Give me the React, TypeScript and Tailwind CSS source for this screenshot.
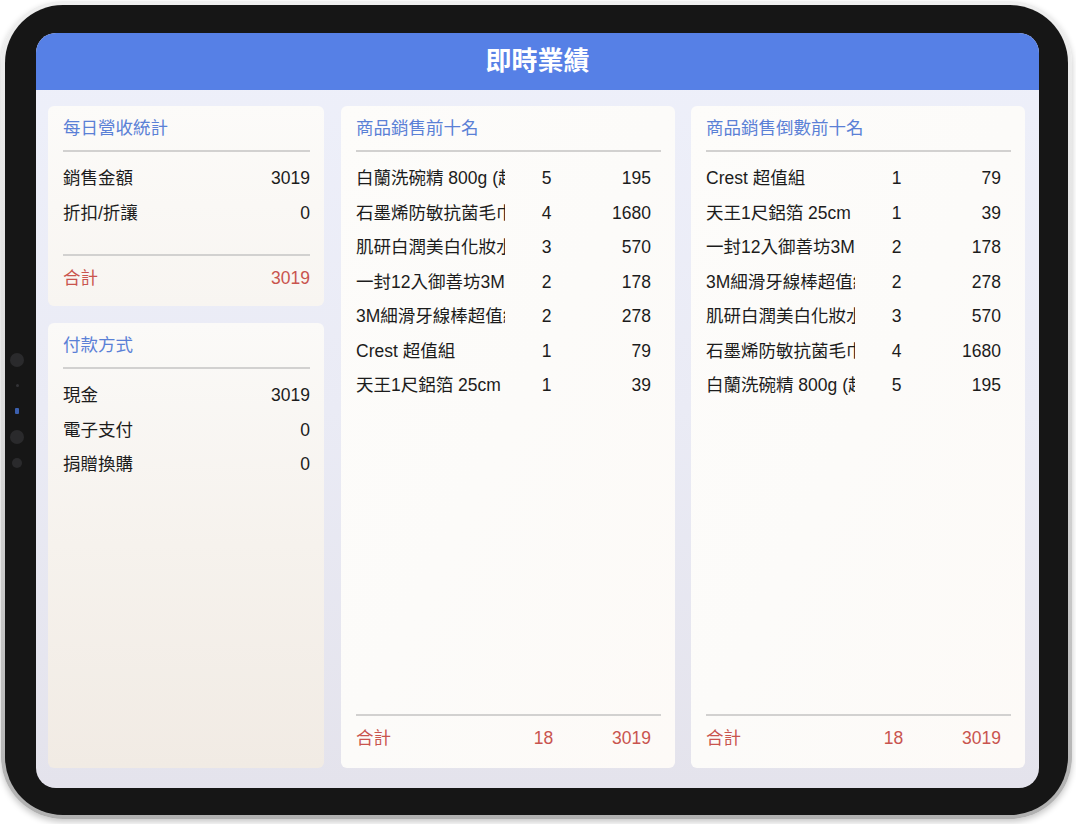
import React from "react";

const FONT = { fontFamily: '"Liberation Sans", "Noto Sans CJK TC", sans-serif' };

type Item = { name: string; qty: number; amount: number };

const top10: Item[] = [
  { name: "白蘭洗碗精 800g (超值組)", qty: 5, amount: 195 },
  { name: "石墨烯防敏抗菌毛巾", qty: 4, amount: 1680 },
  { name: "肌研白潤美白化妝水", qty: 3, amount: 570 },
  { name: "一封12入御善坊3M", qty: 2, amount: 178 },
  { name: "3M細滑牙線棒超值組", qty: 2, amount: 278 },
  { name: "Crest 超值組", qty: 1, amount: 79 },
  { name: "天王1尺鋁箔 25cm", qty: 1, amount: 39 },
];

const bottom10: Item[] = [
  { name: "Crest 超值組", qty: 1, amount: 79 },
  { name: "天王1尺鋁箔 25cm", qty: 1, amount: 39 },
  { name: "一封12入御善坊3M", qty: 2, amount: 178 },
  { name: "3M細滑牙線棒超值組", qty: 2, amount: 278 },
  { name: "肌研白潤美白化妝水", qty: 3, amount: 570 },
  { name: "石墨烯防敏抗菌毛巾", qty: 4, amount: 1680 },
  { name: "白蘭洗碗精 800g (超值組)", qty: 5, amount: 195 },
];

function Title({ children }: { children: React.ReactNode }) {
  return (
    <>
      <div className="pt-[10px] text-[17.5px] leading-[24px] text-[#5a80d6]">{children}</div>
      <div className="mt-[10px] h-[2px] bg-[#d2d1d0]" />
    </>
  );
}

function KV({ k, v }: { k: string; v: string }) {
  return (
    <div className="flex h-[34.5px] items-center justify-between text-[17.5px] text-[#1c1c1c]">
      <span>{k}</span>
      <span>{v}</span>
    </div>
  );
}

function ProductPanel({ title, items }: { title: string; items: Item[] }) {
  return (
    <div className="flex h-full w-[334px] flex-col rounded-[6px] bg-gradient-to-br from-[#fdfcfa] via-[#fcfbf9] to-[#fdfaf7] pl-[15px] pr-[14px] pb-[8px]">
      <Title>{title}</Title>
      <div className="mt-[9px] flex flex-col">
        {items.map((it, i) => (
          <div key={i} className="flex h-[34.5px] items-center text-[17.5px] text-[#1c1c1c]">
            <div className="w-[149px] overflow-hidden whitespace-nowrap">{it.name}</div>
            <div className="w-[83px] text-center">{it.qty}</div>
            <div className="flex-1 pr-[10px] text-right">{it.amount}</div>
          </div>
        ))}
      </div>
      <div className="flex-1" />
      <div className="h-[2px] bg-[#d2d1d0]" />
      <div className="flex h-[44px] items-center text-[17.5px] text-[#c9544e]">
        <div className="w-[149px]">合計</div>
        <div className="w-[77px] text-center">18</div>
        <div className="flex-1 pr-[10px] text-right">3019</div>
      </div>
    </div>
  );
}

export default function App() {
  return (
    <div className="relative h-[824px] w-[1076px] overflow-hidden bg-white" style={FONT}>
      <div className="ml-[1px] mt-[1px] h-[818px] w-[1071px] rounded-[62px] bg-gradient-to-b from-[#efefef] via-[#dcdcdc] to-[#b0b0b0] p-[4px] shadow-[0_3px_6px_rgba(0,0,0,0.22)]">
        <div className="h-full w-full rounded-[58px] bg-[#161616] pl-[31px] pt-[28px] pr-[29px] pb-[27px]">
          <div className="flex h-full w-full flex-col overflow-hidden rounded-[20px] bg-gradient-to-b from-[#eef0fa] via-[#eaebf5] to-[#e4e3ec]">
            <div className="flex h-[57px] items-center justify-center bg-[#5680e6] text-[26px] font-bold text-white">
              即時業績
            </div>
            <div className="flex flex-1 pt-[16px] pl-[12px] pr-[14px] pb-[20px]">
              <div className="flex w-[276px] flex-col gap-[17px]">
                <div className="flex h-[200px] flex-col rounded-[6px] bg-gradient-to-b from-[#fcfbf9] to-[#f8f5f1] pl-[15px] pr-[14px]">
                  <Title>每日營收統計</Title>
                  <div className="mt-[9px] flex flex-col">
                    <KV k="銷售金額" v="3019" />
                    <KV k="折扣/折讓" v="0" />
                  </div>
                  <div className="mt-[24px] h-[2px] bg-[#d2d1d0]" />
                  <div className="flex h-[44px] items-center justify-between text-[17.5px] text-[#c9544e]">
                    <span>合計</span>
                    <span>3019</span>
                  </div>
                </div>
                <div className="flex flex-1 flex-col rounded-[6px] bg-gradient-to-b from-[#fbfaf8] via-[#f6f2ed] to-[#f1ebe4] pl-[15px] pr-[14px]">
                  <Title>付款方式</Title>
                  <div className="mt-[9px] flex flex-col">
                    <KV k="現金" v="3019" />
                    <KV k="電子支付" v="0" />
                    <KV k="捐贈換購" v="0" />
                  </div>
                </div>
              </div>
              <div className="ml-[17px]">
                <ProductPanel title="商品銷售前十名" items={top10} />
              </div>
              <div className="ml-[16px]">
                <ProductPanel title="商品銷售倒數前十名" items={bottom10} />
              </div>
            </div>
          </div>
        </div>
      </div>
      {/* front sensors on left bezel */}
      <div className="absolute left-[10px] top-[353px] h-[14px] w-[14px] rounded-full bg-[#2a2a2c]" />
      <div className="absolute left-[16px] top-[384px] h-[3px] w-[3px] rounded-full bg-[#333336]" />
      <div className="absolute left-[15px] top-[408px] h-[6px] w-[4px] rounded-[1px] bg-[#3b5fae]" />
      <div className="absolute left-[10px] top-[430px] h-[14px] w-[14px] rounded-full bg-[#2a2a2c]" />
      <div className="absolute left-[12px] top-[458px] h-[10px] w-[10px] rounded-full bg-[#2a2a2c]" />
    </div>
  );
}
